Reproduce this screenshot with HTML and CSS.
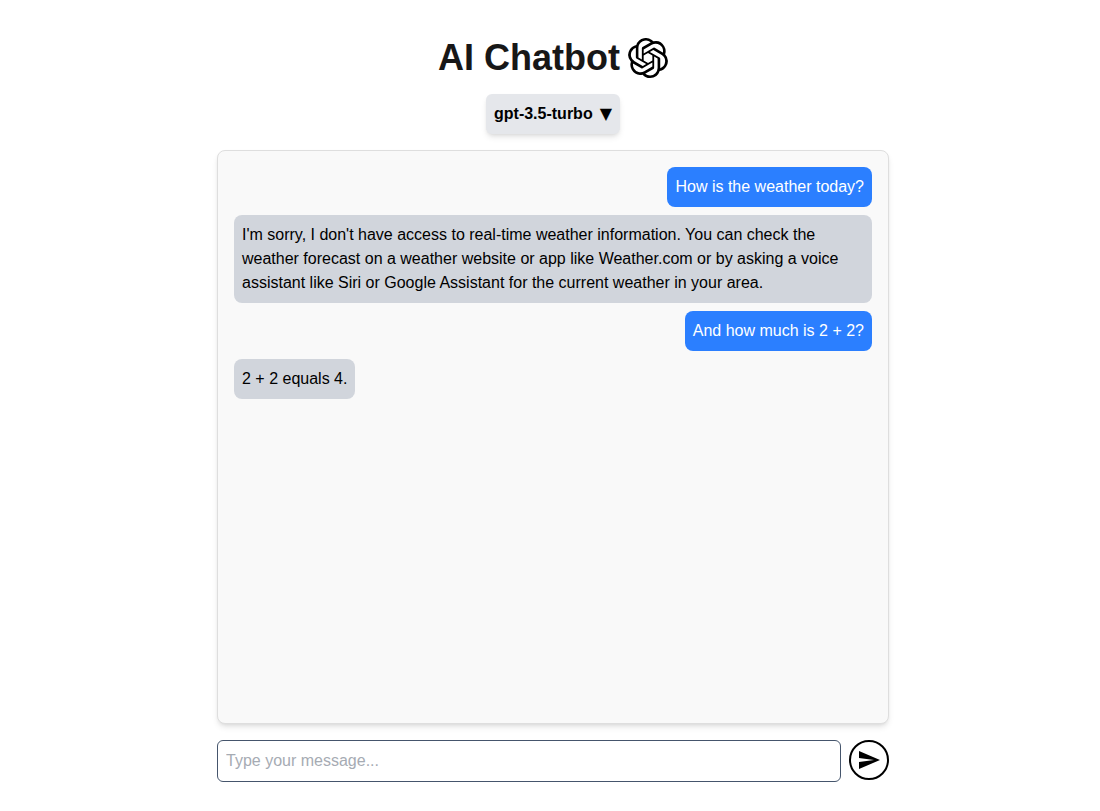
FILE: index.html
```html
<!DOCTYPE html>
<html lang="en">
<head>
  <meta charset="utf-8">
  <meta name="viewport" content="width=device-width, initial-scale=1">
  <title>AI Chatbot</title>
  <link rel="stylesheet" href="styles.css">
</head>
<body>
  <main class="app">
    <header class="header">
      <h1 class="title">AI Chatbot</h1>
      <svg class="logo" viewBox="0 0 24 24" fill="currentColor" aria-hidden="true"><path d="M22.2819 9.8211a5.9847 5.9847 0 0 0-.5157-4.9108 6.0462 6.0462 0 0 0-6.5098-2.9A6.0651 6.0651 0 0 0 4.9807 4.1818a5.9847 5.9847 0 0 0-3.9977 2.9 6.0462 6.0462 0 0 0 .7427 7.0966 5.98 5.98 0 0 0 .511 4.9107 6.051 6.051 0 0 0 6.5146 2.9001A5.9847 5.9847 0 0 0 13.2599 24a6.0557 6.0557 0 0 0 5.7718-4.2058 5.9894 5.9894 0 0 0 3.9977-2.9001 6.0557 6.0557 0 0 0-.7475-7.073zm-9.022 12.6081a4.4755 4.4755 0 0 1-2.8764-1.0408l.1419-.0804 4.7783-2.7582a.7948.7948 0 0 0 .3927-.6813v-6.7369l2.02 1.1686a.071.071 0 0 1 .038.052v5.5826a4.504 4.504 0 0 1-4.4945 4.4944zm-9.6607-4.1254a4.4708 4.4708 0 0 1-.5346-3.0137l.142.0852 4.783 2.7582a.7712.7712 0 0 0 .7806 0l5.8428-3.3685v2.3324a.0804.0804 0 0 1-.0332.0615L9.74 19.9502a4.4992 4.4992 0 0 1-6.1408-1.6464zM2.3408 7.8956a4.485 4.485 0 0 1 2.3655-1.9728V11.6a.7664.7664 0 0 0 .3879.6765l5.8144 3.3543-2.0201 1.1685a.0757.0757 0 0 1-.071 0l-4.8303-2.7865A4.504 4.504 0 0 1 2.3408 7.872zm16.5963 3.8558L13.1038 8.364 15.1192 7.2a.0757.0757 0 0 1 .071 0l4.8303 2.7913a4.4944 4.4944 0 0 1-.6765 8.1042v-5.6772a.79.79 0 0 0-.407-.667zm2.0107-3.0231l-.142-.0852-4.7735-2.7818a.7759.7759 0 0 0-.7854 0L9.409 9.2297V6.8974a.0662.0662 0 0 1 .0284-.0615l4.8303-2.7866a4.4992 4.4992 0 0 1 6.6802 4.66zM8.3065 12.863l-2.02-1.1638a.0804.0804 0 0 1-.038-.0567V6.0742a4.4992 4.4992 0 0 1 7.3757-3.4537l-.142.0805L8.704 5.459a.7948.7948 0 0 0-.3927.6813zm1.0976-2.3654l2.602-1.4998 2.6069 1.4998v2.9994l-2.5974 1.4997-2.6067-1.4997Z"/></svg>
    </header>

    <div class="model">
      <select class="model-select" aria-label="Model">
        <option>gpt-3.5-turbo</option>
      </select>
      <span class="model-arrow" aria-hidden="true">▼</span>
    </div>

    <section class="chat" aria-label="Conversation">
      <p class="message message-user">How is the weather today?</p>
      <p class="message message-bot">I'm sorry, I don't have access to real-time weather information. You can check the weather forecast on a weather website or app like Weather.com or by asking a voice assistant like Siri or Google Assistant for the current weather in your area.</p>
      <p class="message message-user">And how much is 2 + 2?</p>
      <p class="message message-bot">2 + 2 equals 4.</p>
    </section>

    <form class="composer">
      <input class="composer-input" type="text" placeholder="Type your message..." aria-label="Message">
      <button class="send" type="button" aria-label="Send">
        <svg class="send-icon" viewBox="0 0 24 24" fill="currentColor" aria-hidden="true"><path d="M2.01 21 23 12 2.01 3 2 10l15 2-15 2z"/></svg>
      </button>
    </form>
  </main>
</body>
</html>
```
FILE: styles.css
```css
*,
*::before,
*::after {
  box-sizing: border-box;
}

body {
  margin: 0;
  background: #fff;
  color: #000;
  font: 16px/24px "Liberation Sans", Arial, sans-serif;
}

.app {
  display: flex;
  flex-direction: column;
  align-items: center;
  gap: 16px;
  min-height: 100vh;
  padding: 38px 0 29px 6px;
}

.header {
  display: flex;
  align-items: center;
  gap: 8px;
}

.title {
  margin: 0;
  color: #171717;
  font-size: 36px;
  line-height: 40px;
  font-weight: 700;
}

.logo {
  width: 40px;
  height: 40px;
}

.model {
  display: grid;
  grid-template-columns: 1fr;
  align-items: center;
  width: 134px;
  border-radius: 6px;
  background: #e5e7eb;
  box-shadow: 0 4px 6px -1px rgb(0 0 0 / 10%), 0 2px 4px -2px rgb(0 0 0 / 10%);
  font-weight: 700;
}

.model-select,
.model-arrow {
  grid-area: 1 / 1;
}

.model-select {
  appearance: none;
  height: 40px;
  padding: 0 24px 0 8px;
  border: 0;
  border-radius: 6px;
  background: transparent;
  color: inherit;
  font: inherit;
}

.model-arrow {
  justify-self: end;
  padding-right: 8px;
  font-family: "DejaVu Sans", sans-serif;
  pointer-events: none;
}

.chat {
  display: flex;
  flex: 1;
  flex-direction: column;
  gap: 8px;
  width: 100%;
  max-width: 672px;
  padding: 16px;
  border: 1px solid #dedede;
  border-radius: 8px;
  background: #f9f9f9;
  box-shadow: 0 4px 6px -1px rgb(0 0 0 / 10%), 0 2px 4px -2px rgb(0 0 0 / 10%);
}

.message {
  margin: 0;
  padding: 8px;
  border-radius: 8px;
}

.message-user {
  align-self: flex-end;
  background: #2b7fff;
  color: #fff;
}

.message-bot {
  align-self: flex-start;
  background: #d1d5dc;
}

.composer {
  display: flex;
  gap: 8px;
  width: 100%;
  max-width: 672px;
}

.composer-input {
  flex: 1;
  min-width: 0;
  height: 42px;
  padding: 8px;
  border: 1px solid #45556c;
  border-radius: 6px;
  background: #fff;
  color: #000;
  font: inherit;
}

.composer-input::placeholder {
  color: #a6abb3;
  opacity: 1;
}

.send {
  display: flex;
  align-items: center;
  justify-content: center;
  width: 40px;
  height: 40px;
  padding: 0;
  border: 2px solid #000;
  border-radius: 50%;
  background: #fff;
  color: #000;
}

.send-icon {
  width: 24px;
  height: 24px;
}
```
